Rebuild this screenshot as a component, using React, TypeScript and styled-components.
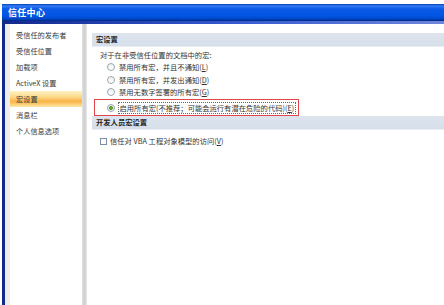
import React from "react";
import styled, { createGlobalStyle } from "styled-components";

const GlobalStyle = createGlobalStyle`
  html, body { margin: 0; padding: 0; background: #ffffff; overflow: hidden; }
  body { font-family: "Noto Sans CJK SC", "Liberation Sans", sans-serif; }
`;

const Window = styled.div`
  margin: 4px 0 0 2px;
  height: 301px;
  display: flex;
  flex-direction: column;
`;

const TitleBar = styled.div`
  height: 17px;
  flex: none;
  display: flex;
  align-items: center;
  padding-left: 6px;
  color: #ffffff;
  font-size: 9px;
  font-weight: bold;
  letter-spacing: 0.3px;
  background: linear-gradient(
    to bottom,
    #0b3fb8 0px,
    #2f7cf4 2px,
    #0c5ae6 5px,
    #0055e3 12px,
    #0046c4 15px,
    #00287e 17px
  );
`;

const Frame = styled.div`
  flex: 1;
  display: flex;
  border-left: 3px solid;
  border-image: linear-gradient(to right, #122a8e, #3357cf, #6d86dc) 1;
  border-top: 3px solid;
  border-top-color: #c7d3e4;
  background: #eeeeee;
  padding-left: 5px;
`;

const Nav = styled.nav`
  width: 72px;
  flex: none;
  background: #ffffff;
  padding-top: 3px;
  display: flex;
  flex-direction: column;
`;

const NavItem = styled.div<{ $active?: boolean }>`
  height: 16px;
  line-height: 16px;
  padding-left: 6px;
  font-size: 7.2px;
  color: #3a3a3a;
  white-space: nowrap;
  background: ${(p) =>
    p.$active
      ? "linear-gradient(to bottom, #fff1c4 0%, #fddc8c 35%, #f9b34a 65%, #fcd27a 85%, #fee7a8 100%)"
      : "transparent"};
`;

const Separator = styled.div`
  width: 5px;
  flex: none;
  background: linear-gradient(to right, #e4e4e4, #cfcfcf 40%, #d6d6d6 70%, #ececec);
`;

const Content = styled.main`
  flex: 1;
  background: #ffffff;
  padding: 9px 0 0 5px;
  display: flex;
  flex-direction: column;
  color: #333333;
  font-size: 7.3px;
`;

const SectionHeader = styled.div<{ $gap?: number }>`
  height: 13px;
  line-height: 13px;
  padding-left: 4px;
  margin-top: ${(p) => p.$gap ?? 0}px;
  background: linear-gradient(to bottom, #dde4ee, #d6dfea);
  border-bottom: 1px solid #e9eef4;
  font-weight: bold;
  color: #1e1e1e;
  font-size: 7.3px;
`;

const Description = styled.div`
  height: 12px;
  line-height: 12px;
  margin-top: 2px;
  padding-left: 8px;
  white-space: nowrap;
`;

const OptionList = styled.div`
  display: flex;
  flex-direction: column;
  padding-left: 15px;
`;

const OptionRow = styled.div`
  height: 12.6px;
  display: flex;
  align-items: center;
  gap: 4px;
  white-space: nowrap;
`;

const Highlight = styled.div`
  width: fit-content;
  margin-left: -13px;
  padding: 1.5px 3px 1.5px 11.5px;
  border: 1.5px solid #e2444a;
`;

const Radio = styled.span<{ $checked?: boolean }>`
  width: 6px;
  height: 6px;
  flex: none;
  border-radius: 50%;
  border: 1px solid #9aa6b4;
  background: ${(p) =>
    p.$checked
      ? "radial-gradient(circle, #6fbf3c 0, #4f9a2a 1.6px, #f2f2ee 2.2px)"
      : "linear-gradient(#f0f0ec, #ffffff)"};
`;

const FocusLabel = styled.span`
  outline: 1px dotted #666666;
  outline-offset: 0;
  padding: 0 1px;
`;

const U = styled.span`
  text-decoration: underline;
`;

const CheckRow = styled.div`
  height: 12px;
  display: flex;
  align-items: center;
  gap: 3px;
  margin-top: 5px;
  padding-left: 8px;
  white-space: nowrap;
`;

const Checkbox = styled.span`
  width: 5px;
  height: 5px;
  flex: none;
  border: 1px solid #7d8fa8;
  background: #fbfbfb;
`;

const navItems = ["受信任的发布者", "受信任位置", "加载项", "ActiveX 设置", "宏设置", "消息栏", "个人信息选项"];

export default function App() {
  return (
    <>
      <GlobalStyle />
      <Window>
        <TitleBar>信任中心</TitleBar>
        <Frame>
          <Nav>
            {navItems.map((t) => (
              <NavItem key={t} $active={t === "宏设置"}>
                {t}
              </NavItem>
            ))}
          </Nav>
          <Separator />
          <Content>
            <SectionHeader>宏设置</SectionHeader>
            <Description>对于在非受信任位置的文档中的宏:</Description>
            <OptionList>
              <OptionRow>
                <Radio />
                <span>
                  禁用所有宏，并且不通知(<U>L</U>)
                </span>
              </OptionRow>
              <OptionRow>
                <Radio />
                <span>
                  禁用所有宏，并发出通知(<U>D</U>)
                </span>
              </OptionRow>
              <OptionRow>
                <Radio />
                <span>
                  禁用无数字签署的所有宏(<U>G</U>)
                </span>
              </OptionRow>
              <Highlight>
                <OptionRow>
                  <Radio $checked />
                  <FocusLabel>
                    启用所有宏(不推荐；可能会运行有潜在危险的代码)(<U>E</U>)
                  </FocusLabel>
                </OptionRow>
              </Highlight>
            </OptionList>
            <SectionHeader $gap={0}>开发人员宏设置</SectionHeader>
            <CheckRow>
              <Checkbox />
              <span>
                信任对 VBA 工程对象模型的访问(<U>V</U>)
              </span>
            </CheckRow>
          </Content>
        </Frame>
      </Window>
    </>
  );
}
